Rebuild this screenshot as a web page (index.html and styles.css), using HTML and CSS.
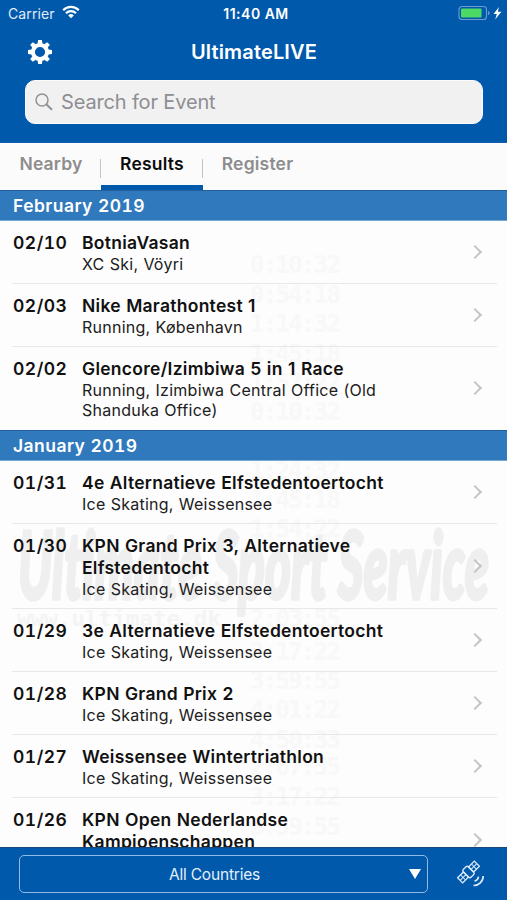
FILE: index.html
```html
<!DOCTYPE html>
<html lang="en">
<head>
<meta charset="utf-8">
<title>UltimateLIVE</title>
<link rel="stylesheet" href="styles.css">
</head>
<body>
<div class="app">
  <header class="top">
    <div class="status">
      <span class="carrier">Carrier</span>
      <svg class="wifi" width="18" height="14" viewBox="0 0 18 14" fill="none" stroke="#fff" stroke-width="2.2"><path d="M1.2 5.2a11 11 0 0 1 15.6 0M4 8.2a7 7 0 0 1 10 0"/><path d="M9 13.2L6.2 10.4a4 4 0 0 1 5.6 0Z" fill="#fff" stroke="none"/></svg>
      <span class="clock">11:40 AM</span>
      <svg class="battery" width="44" height="16" viewBox="0 0 44 16"><rect x="1" y="1.500" width="27.500" height="13" rx="3" fill="none" stroke="#6b9ccd" stroke-width="1.100"/><rect x="3" y="3.500" width="20.500" height="9" rx="1" fill="#4cd964"/><path d="M30 6v4.200q1.700-.6 1.700-2.100T30 6Z" fill="#6b9ccd"/><path d="M41 2L35.500 9h3.300L37.200 14.500l6.200-7.800h-3.600Z" fill="#fff"/></svg>
    </div>
    <div class="nav">
      <svg class="gear" width="26" height="26" viewBox="-13 -13 26 26"><circle r="7.100" fill="none" stroke="#fff" stroke-width="4"/><g fill="#fff"><path id="tooth" d="M-2.500-8L-1.900-12h3.800L2.500-8Z"/><use href="#tooth" transform="rotate(45)"/><use href="#tooth" transform="rotate(90)"/><use href="#tooth" transform="rotate(135)"/><use href="#tooth" transform="rotate(180)"/><use href="#tooth" transform="rotate(225)"/><use href="#tooth" transform="rotate(270)"/><use href="#tooth" transform="rotate(315)"/></g></svg>
      <h1>UltimateLIVE</h1>
    </div>
    <div class="search">
      <svg width="18" height="18" viewBox="0 0 18 18" fill="none" stroke="#929294" stroke-width="1.500"><circle cx="7" cy="7" r="6"/><path d="M11.300 11.300l5.700 5.500" stroke-width="2"/></svg>
      <span>Search for Event</span>
    </div>
  </header>
  <nav class="tabs">
    <a class="tab nearby">Nearby</a>
    <a class="tab active">Results</a>
    <a class="tab register">Register</a>
  </nav>
  <main class="list">
    <svg class="watermark" width="507" height="657" viewBox="0 190 507 657" aria-hidden="true">
      <g class="times">
        <text x="250" y="273" textLength="91">0:10:32</text>
        <text x="250" y="303" textLength="91">0:54:18</text>
        <text x="250" y="332" textLength="91">1:14:32</text>
        <text x="250" y="362" textLength="91">1:45:18</text>
        <text x="250" y="391" textLength="91">1:57:22</text>
        <text x="250" y="420" textLength="91">0:10:32</text>
        <text x="250" y="479" textLength="91">1:24:32</text>
        <text x="250" y="508" textLength="91">1:45:18</text>
        <text x="250" y="537" textLength="91">1:54:22</text>
        <text x="250" y="627" textLength="91">2:03:55</text>
        <text x="250" y="660" textLength="91">2:17:22</text>
        <text x="250" y="689" textLength="91">3:59:55</text>
        <text x="250" y="718" textLength="91">4:01:22</text>
        <text x="250" y="748" textLength="91">4:50:33</text>
        <text x="250" y="775" textLength="91">2:07:55</text>
        <text x="250" y="805" textLength="91">3:17:22</text>
        <text x="250" y="835" textLength="91">3:59:55</text>
      </g>
      <text class="brand" x="18" y="599" textLength="471" lengthAdjust="spacingAndGlyphs">Ultimate Sport Service</text>
      <text class="site" x="17" y="626" textLength="204" lengthAdjust="spacingAndGlyphs">www.ultimate.dk</text>
    </svg>
    <h2>February 2019</h2>
    <article class="row"><time>02/10</time><div class="info"><h3>BotniaVasan</h3><p>XC Ski, Vöyri</p></div><i class="chev"></i></article>
    <article class="row"><time>02/03</time><div class="info"><h3>Nike Marathontest 1</h3><p>Running, København</p></div><i class="chev"></i></article>
    <article class="row last"><time>02/02</time><div class="info"><h3>Glencore/Izimbiwa 5 in 1 Race</h3><p>Running, Izimbiwa Central Office (Old<br>Shanduka Office)</p></div><i class="chev"></i></article>
    <h2>January 2019</h2>
    <article class="row"><time>01/31</time><div class="info"><h3>4e Alternatieve Elfstedentoertocht</h3><p>Ice Skating, Weissensee</p></div><i class="chev"></i></article>
    <article class="row"><time>01/30</time><div class="info"><h3>KPN Grand Prix 3, Alternatieve<br>Elfstedentocht</h3><p>Ice Skating, Weissensee</p></div><i class="chev"></i></article>
    <article class="row"><time>01/29</time><div class="info"><h3>3e Alternatieve Elfstedentoertocht</h3><p>Ice Skating, Weissensee</p></div><i class="chev"></i></article>
    <article class="row"><time>01/28</time><div class="info"><h3>KPN Grand Prix 2</h3><p>Ice Skating, Weissensee</p></div><i class="chev"></i></article>
    <article class="row"><time>01/27</time><div class="info"><h3>Weissensee Wintertriathlon</h3><p>Ice Skating, Weissensee</p></div><i class="chev"></i></article>
    <article class="row"><time>01/26</time><div class="info"><h3>KPN Open Nederlandse<br>Kampioenschappen</h3><p>Ice Skating, Weissensee</p></div><i class="chev"></i></article>
  </main>
  <footer class="bottom">
    <div class="select"><span>All Countries</span><i class="caret"></i></div>
    <svg class="sat" width="30" height="30" viewBox="0 0 30 30" fill="none" stroke="#dcebfa" stroke-width="1.300"><g transform="translate(12.500 13) rotate(-45)"><rect x="-3.600" y="-5.500" width="7.200" height="11" rx="2"/><rect x="-11.800" y="-3.600" width="8.200" height="7.200"/><rect x="3.600" y="-3.600" width="8.200" height="7.200"/><path d="M-7.700-3.600v7.200M-11.800 0h8.200M7.700-3.600v7.200M3.600 0h8.200" stroke-width="1"/></g><path d="M18.500 22a5 5 0 0 0 4-4.300M17.500 26.500a9.500 9.500 0 0 0 9.700-9.500" stroke-width="1.700"/></svg>
  </footer>
</div>
</body>
</html>
```
FILE: styles.css
```css
* { box-sizing: border-box; }
body { margin: 0; font-family: Inter, "Liberation Sans", sans-serif; color: #111; }
h1, h2, h3, p { margin: 0; font-weight: 600; }
.app { width: 507px; height: 900px; display: flex; flex-direction: column; overflow: hidden; background: #fdfdfd; }
.top { flex: none; height: 143px; background: #0059ab; color: #fff; border-bottom: 1px solid #0f61af; }
.status { height: 28px; display: grid; grid-template-columns: 54px 1fr auto 1fr 54px; align-items: center; padding: 0 5px 2px 8px; }
.carrier { font-size: 14px; letter-spacing: 0.1px; color: #e0ecf8; }
.wifi { margin-top: -2px; }
.clock { font-size: 14px; font-weight: 600; letter-spacing: 0.5px; padding-left: 2px; }
.battery { grid-column: 5; justify-self: end; }
.nav { height: 52px; display: grid; grid-template-columns: 80px 1fr 80px; align-items: center; padding-bottom: 4px; }
.gear { margin-left: 27px; }
.nav h1 { font-size: 20px; text-align: center; line-height: 24px; letter-spacing: 0.15px; padding-left: 1px; }
.search { height: 44px; margin: 0 24px 0 25px; border-radius: 10px; background: #f1f1f1; border: 1px solid #fafafa; display: flex; align-items: center; gap: 8px; padding-left: 9px; color: #8e8e93; font-size: 20px; letter-spacing: -0.15px; }
.tabs { flex: none; height: 47px; display: flex; background: #fbfbfb; font-size: 17.5px; font-weight: 600; letter-spacing: 0.2px; }
.tab { height: 47px; line-height: 42px; text-align: center; color: #8d8d8d; background: linear-gradient(#c4c4c4, #c4c4c4) right 16px / 1px 19px no-repeat; }
.nearby { width: 101px; padding-left: 1px; }
.active { width: 102px; color: #0b0b0b; border-bottom: 5px solid #0059ab; }
.register { width: 109px; background: none; }
.list { flex: 1; min-height: 0; overflow: hidden; position: relative; }
.watermark { position: absolute; left: 0; top: 0; z-index: 0; }
.times { font: bold 24px "DejaVu Sans Mono", monospace; fill: #f8f8f8; }
.brand { font: italic 900 94px Lato, sans-serif; fill: #efefef; stroke: #efefef; stroke-width: 3.5px; stroke-linejoin: round; }
.site { font: bold 22px "DejaVu Sans Mono", monospace; fill: #f4f4f4; }
.list h2 { position: relative; height: 31px; padding-left: 13px; font-size: 17.5px; letter-spacing: 0.45px; font-variant-numeric: tabular-nums; color: #fff; background: #3079bc; border-top: 1px solid #235f98; border-bottom: 1px solid #78a8d5; line-height: 30px; }
.row { position: relative; display: grid; grid-template-columns: 69px 1fr 20px; padding: 10px 0 10px 13px; margin-right: 10px; }
.row::after { content: ""; position: absolute; left: 12px; right: 0; bottom: 0; height: 1px; background: #e7e7e7; }
.row.last::after { display: none; }
.row time, .row h3 { font-size: 17.5px; line-height: 22px; font-weight: 600; position: relative; top: 0.5px; }
.row time { letter-spacing: 0.5px; font-variant-numeric: tabular-nums; white-space: nowrap; }
.row h3 { letter-spacing: 0.27px; word-spacing: 0.6px; white-space: nowrap; }
.row p { font-size: 16px; line-height: 20px; font-weight: 400; letter-spacing: 0.25px; word-spacing: 0.4px; margin-top: 1px; color: #202020; white-space: nowrap; }
.chev { align-self: center; width: 10px; height: 10px; border: solid #c5c5c8; border-width: 2px 2px 0 0; transform: translate(-7px, -1px) rotate(45deg); }
.bottom { flex: none; height: 53px; background: #0059ab; border-top: 1px solid #18477a; display: flex; align-items: center; padding: 0 20px 0 19px; position: relative; }
.select { width: 409px; height: 38px; border: 1.5px solid #8fbce5; border-radius: 5px; display: flex; align-items: center; justify-content: center; color: #e3effb; font-size: 15.5px; letter-spacing: -0.2px; position: relative; padding-right: 18px; }
.caret { position: absolute; right: 6px; top: 13px; border: solid transparent; border-width: 10px 6px 0; border-top-color: #fff; }
.sat { margin-left: 28px; }
```
